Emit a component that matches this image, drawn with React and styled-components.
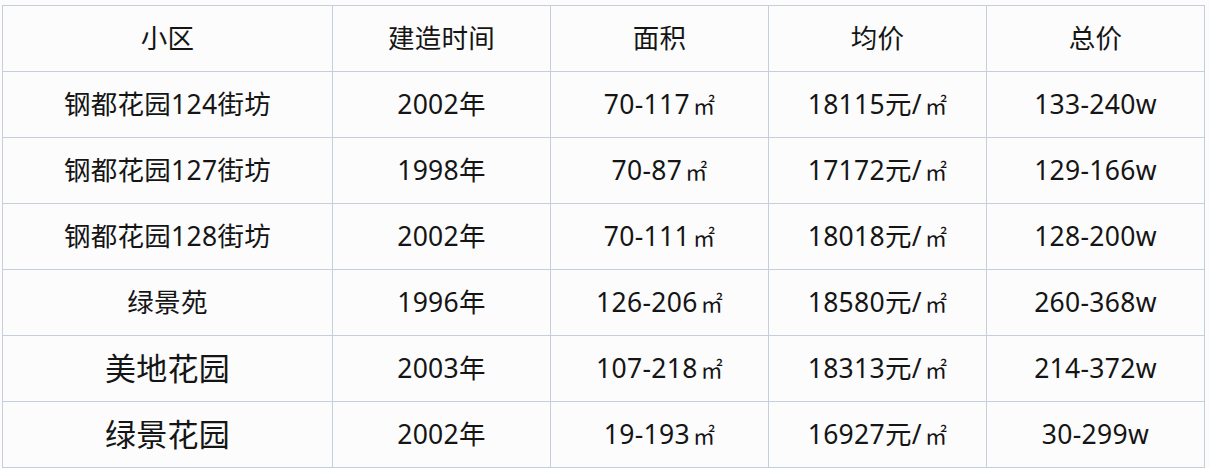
import React from 'react';
import styled, {createGlobalStyle} from 'styled-components';

const GlobalStyle = createGlobalStyle`
  html, body {
    margin: 0;
    padding: 0;
    background: #fcfcfd;
  }
`;

const Wrapper = styled.div`
  padding: 5px 0 0 2px;
`;

const Table = styled.table`
  border-collapse: collapse;
  table-layout: fixed;
  width: 1202px;
  font-family: 'Noto Sans', 'Noto Sans CJK SC', sans-serif;
  color: #151515;
`;

const Cell = styled.td`
  height: 65px;
  padding: 0;
  border: 1px solid #c6cedc;
  text-align: center;
  vertical-align: middle;
  font-size: ${props => (props.$big ? '31px' : '26.5px')};
  font-weight: 400;
  line-height: 1;
  letter-spacing: 0.3px;
  white-space: nowrap;
`;

const HeadCell = styled(Cell).attrs({as: 'th'})``;

const Unit = styled.span`
  font-family: 'Noto Sans CJK SC', sans-serif;
  font-size: 22px;
  margin-left: 3px;
`;

const columns = [
  {title: '小区', width: 330},
  {title: '建造时间', width: 218},
  {title: '面积', width: 218},
  {title: '均价', width: 218},
  {title: '总价', width: 218},
];

const rows = [
  {name: '钢都花园124街坊', year: '2002年', area: '70-117', price: '18115', total: '133-240w'},
  {name: '钢都花园127街坊', year: '1998年', area: '70-87', price: '17172', total: '129-166w'},
  {name: '钢都花园128街坊', year: '2002年', area: '70-111', price: '18018', total: '128-200w'},
  {name: '绿景苑', year: '1996年', area: '126-206', price: '18580', total: '260-368w'},
  {name: '美地花园', year: '2003年', area: '107-218', price: '18313', total: '214-372w', big: true},
  {name: '绿景花园', year: '2002年', area: '19-193', price: '16927', total: '30-299w', big: true},
];

const App = () => {
  return (
    <>
      <GlobalStyle />
      <Wrapper>
        <Table>
          <colgroup>
            {columns.map(col => (
              <col key={col.title} style={{width: col.width}} />
            ))}
          </colgroup>
          <thead>
            <tr>
              {columns.map(col => (
                <HeadCell key={col.title}>{col.title}</HeadCell>
              ))}
            </tr>
          </thead>
          <tbody>
            {rows.map(row => (
              <tr key={row.name}>
                <Cell $big={row.big}>{row.name}</Cell>
                <Cell>{row.year}</Cell>
                <Cell>
                  {row.area}
                  <Unit>㎡</Unit>
                </Cell>
                <Cell>
                  {row.price}元/<Unit>㎡</Unit>
                </Cell>
                <Cell>{row.total}</Cell>
              </tr>
            ))}
          </tbody>
        </Table>
      </Wrapper>
    </>
  );
};

export default App;
